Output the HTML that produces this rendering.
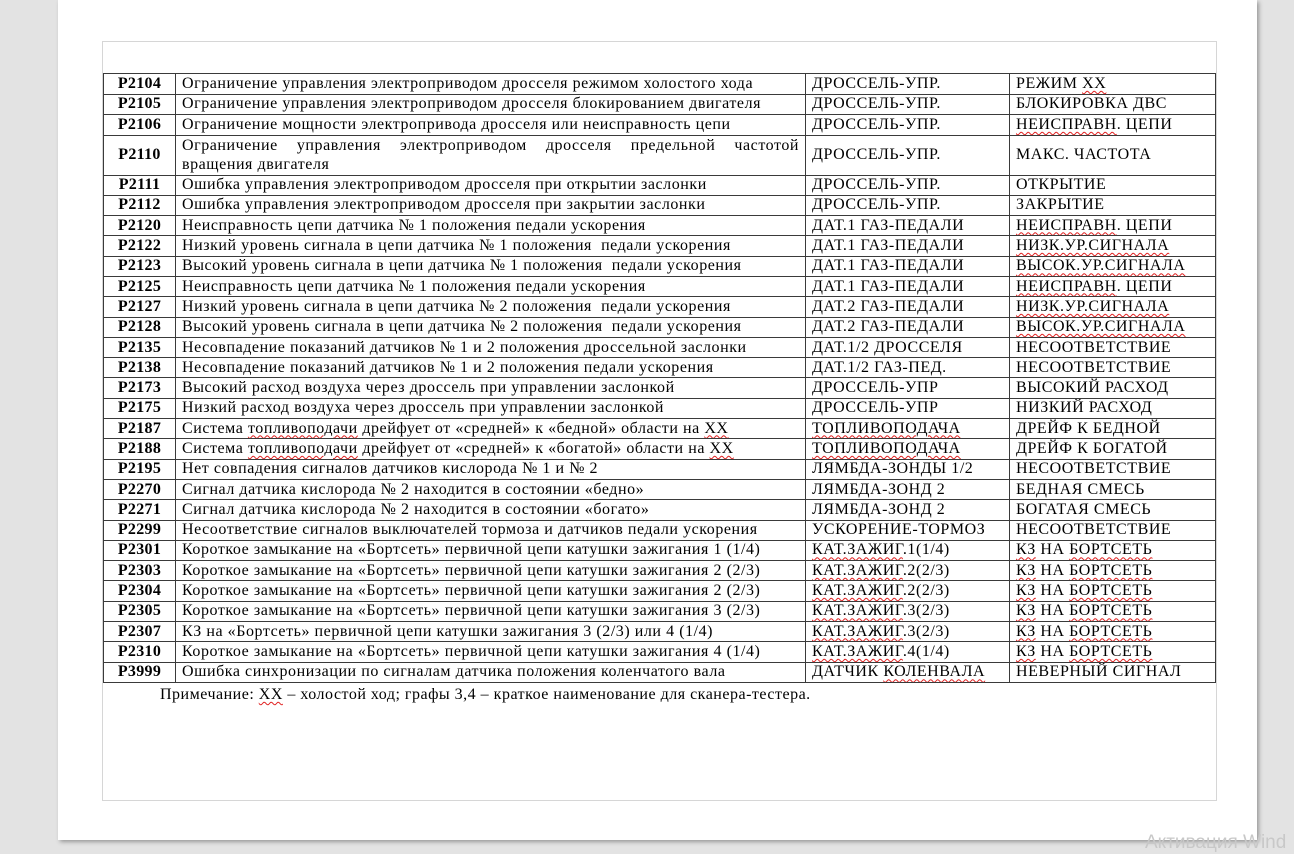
<!DOCTYPE html>
<html><head><meta charset="utf-8"><style>
body{margin:0;width:1294px;height:854px;background:#e3e3e3;position:relative;overflow:hidden;font-family:"Liberation Serif",serif;}
.page{position:absolute;left:58px;top:0;width:1199px;height:840px;background:#fff;box-shadow:2px 2px 4px #999;}
.frame{position:absolute;left:102px;top:41px;width:1113px;height:758px;border:1px solid #d6d6d6;}
table{position:absolute;left:103px;top:73px;border-collapse:collapse;table-layout:fixed;width:1112px;font-size:16px;letter-spacing:0.55px;color:#000;}
td{border:1px solid #3a3a3a;padding:0 6px;height:19.3px;line-height:18px;white-space:nowrap;overflow:hidden;}
td:first-child{font-weight:bold;text-align:center;padding:0;letter-spacing:0.3px;}
tr.t td{height:19.5px}
td.j{white-space:normal;text-align:justify;text-align-last:left;line-height:19px;}
.w{text-decoration:underline wavy #e02020;text-decoration-thickness:1px;text-underline-offset:2px;}
.note{position:absolute;left:160px;top:686px;font-size:16px;letter-spacing:0.5px;}
.act{position:absolute;left:1145px;top:832px;font-family:"Liberation Sans",sans-serif;font-size:19px;color:#c8c8c8;}
</style></head><body>
<div class="page"></div>
<div class="frame"></div>
<table>
<colgroup><col style="width:72px"><col style="width:630px"><col style="width:204px"><col style="width:206px"></colgroup>
<tr class="t"><td>P2104</td><td>Ограничение управления электроприводом дросселя режимом холостого хода</td><td>ДРОССЕЛЬ-УПР.</td><td>РЕЖИМ <span class="w">ХХ</span></td></tr>
<tr class="t"><td>P2105</td><td>Ограничение управления электроприводом дросселя блокированием двигателя</td><td>ДРОССЕЛЬ-УПР.</td><td>БЛОКИРОВКА ДВС</td></tr>
<tr class="t"><td>P2106</td><td>Ограничение мощности электропривода дросселя или неисправность цепи</td><td>ДРОССЕЛЬ-УПР.</td><td><span class="w">НЕИСПРАВН</span>. ЦЕПИ</td></tr>
<tr><td style="height:39px">P2110</td><td class="j">Ограничение управления электроприводом дросселя предельной частотой вращения двигателя</td><td>ДРОССЕЛЬ-УПР.</td><td>МАКС. ЧАСТОТА</td></tr>
<tr><td>P2111</td><td>Ошибка управления электроприводом дросселя при открытии заслонки</td><td>ДРОССЕЛЬ-УПР.</td><td>ОТКРЫТИЕ</td></tr>
<tr><td>P2112</td><td>Ошибка управления электроприводом дросселя при закрытии заслонки</td><td>ДРОССЕЛЬ-УПР.</td><td>ЗАКРЫТИЕ</td></tr>
<tr><td>P2120</td><td>Неисправность цепи датчика № 1 положения педали ускорения</td><td>ДАТ.1 ГАЗ-ПЕДАЛИ</td><td><span class="w">НЕИСПРАВН</span>. ЦЕПИ</td></tr>
<tr><td>P2122</td><td>Низкий уровень сигнала в цепи датчика № 1 положения&nbsp; педали ускорения</td><td>ДАТ.1 ГАЗ-ПЕДАЛИ</td><td><span class="w">НИЗК.УР.СИГНАЛА</span></td></tr>
<tr><td>P2123</td><td>Высокий уровень сигнала в цепи датчика № 1 положения&nbsp; педали ускорения</td><td>ДАТ.1 ГАЗ-ПЕДАЛИ</td><td><span class="w">ВЫСОК.УР.СИГНАЛА</span></td></tr>
<tr><td>P2125</td><td>Неисправность цепи датчика № 1 положения педали ускорения</td><td>ДАТ.1 ГАЗ-ПЕДАЛИ</td><td><span class="w">НЕИСПРАВН</span>. ЦЕПИ</td></tr>
<tr><td>P2127</td><td>Низкий уровень сигнала в цепи датчика № 2 положения&nbsp; педали ускорения</td><td>ДАТ.2 ГАЗ-ПЕДАЛИ</td><td><span class="w">НИЗК.УР.СИГНАЛА</span></td></tr>
<tr><td>P2128</td><td>Высокий уровень сигнала в цепи датчика № 2 положения&nbsp; педали ускорения</td><td>ДАТ.2 ГАЗ-ПЕДАЛИ</td><td><span class="w">ВЫСОК.УР.СИГНАЛА</span></td></tr>
<tr><td>P2135</td><td>Несовпадение показаний датчиков № 1 и 2 положения дроссельной заслонки</td><td>ДАТ.1/2 ДРОССЕЛЯ</td><td>НЕСООТВЕТСТВИЕ</td></tr>
<tr><td>P2138</td><td>Несовпадение показаний датчиков № 1 и 2 положения педали ускорения</td><td>ДАТ.1/2 ГАЗ-ПЕД.</td><td>НЕСООТВЕТСТВИЕ</td></tr>
<tr><td>P2173</td><td>Высокий расход воздуха через дроссель при управлении заслонкой</td><td>ДРОССЕЛЬ-УПР</td><td>ВЫСОКИЙ РАСХОД</td></tr>
<tr><td>P2175</td><td>Низкий расход воздуха через дроссель при управлении заслонкой</td><td>ДРОССЕЛЬ-УПР</td><td>НИЗКИЙ РАСХОД</td></tr>
<tr><td>P2187</td><td>Система <span class="w">топливоподачи</span> дрейфует от «средней» к «бедной» области на <span class="w">ХХ</span></td><td><span class="w">ТОПЛИВОПОДАЧА</span></td><td>ДРЕЙФ К БЕДНОЙ</td></tr>
<tr><td>P2188</td><td>Система <span class="w">топливоподачи</span> дрейфует от «средней» к «богатой» области на <span class="w">ХХ</span></td><td><span class="w">ТОПЛИВОПОДАЧА</span></td><td>ДРЕЙФ К БОГАТОЙ</td></tr>
<tr><td>P2195</td><td>Нет совпадения сигналов датчиков кислорода № 1 и № 2</td><td>ЛЯМБДА-ЗОНДЫ 1/2</td><td>НЕСООТВЕТСТВИЕ</td></tr>
<tr><td>P2270</td><td>Сигнал датчика кислорода № 2 находится в состоянии «бедно»</td><td>ЛЯМБДА-ЗОНД 2</td><td>БЕДНАЯ СМЕСЬ</td></tr>
<tr><td>P2271</td><td>Сигнал датчика кислорода № 2 находится в состоянии «богато»</td><td>ЛЯМБДА-ЗОНД 2</td><td>БОГАТАЯ СМЕСЬ</td></tr>
<tr><td>P2299</td><td>Несоответствие сигналов выключателей тормоза и датчиков педали ускорения</td><td>УСКОРЕНИЕ-ТОРМОЗ</td><td>НЕСООТВЕТСТВИЕ</td></tr>
<tr><td>P2301</td><td>Короткое замыкание на «Бортсеть» первичной цепи катушки зажигания 1 (1/4)</td><td><span class="w">КАТ.ЗАЖИГ</span>.1(1/4)</td><td><span class="w">КЗ</span> НА <span class="w">БОРТСЕТЬ</span></td></tr>
<tr><td>P2303</td><td>Короткое замыкание на «Бортсеть» первичной цепи катушки зажигания 2 (2/3)</td><td><span class="w">КАТ.ЗАЖИГ</span>.2(2/3)</td><td><span class="w">КЗ</span> НА <span class="w">БОРТСЕТЬ</span></td></tr>
<tr><td>P2304</td><td>Короткое замыкание на «Бортсеть» первичной цепи катушки зажигания 2 (2/3)</td><td><span class="w">КАТ.ЗАЖИГ</span>.2(2/3)</td><td><span class="w">КЗ</span> НА <span class="w">БОРТСЕТЬ</span></td></tr>
<tr><td>P2305</td><td>Короткое замыкание на «Бортсеть» первичной цепи катушки зажигания 3 (2/3)</td><td><span class="w">КАТ.ЗАЖИГ</span>.3(2/3)</td><td><span class="w">КЗ</span> НА <span class="w">БОРТСЕТЬ</span></td></tr>
<tr><td>P2307</td><td>КЗ на «Бортсеть» первичной цепи катушки зажигания 3 (2/3) или 4 (1/4)</td><td><span class="w">КАТ.ЗАЖИГ</span>.3(2/3)</td><td><span class="w">КЗ</span> НА <span class="w">БОРТСЕТЬ</span></td></tr>
<tr><td>P2310</td><td>Короткое замыкание на «Бортсеть» первичной цепи катушки зажигания 4 (1/4)</td><td><span class="w">КАТ.ЗАЖИГ</span>.4(1/4)</td><td><span class="w">КЗ</span> НА <span class="w">БОРТСЕТЬ</span></td></tr>
<tr><td>P3999</td><td>Ошибка синхронизации по сигналам датчика положения коленчатого вала</td><td>ДАТЧИК <span class="w">КОЛЕНВАЛА</span></td><td>НЕВЕРНЫЙ СИГНАЛ</td></tr>
</table>
<div class="note">Примечание: <span class="w">ХХ</span> – холостой ход; графы 3,4 – краткое наименование для сканера-тестера.</div>
<div class="act">Активация Wind</div>
</body></html>
